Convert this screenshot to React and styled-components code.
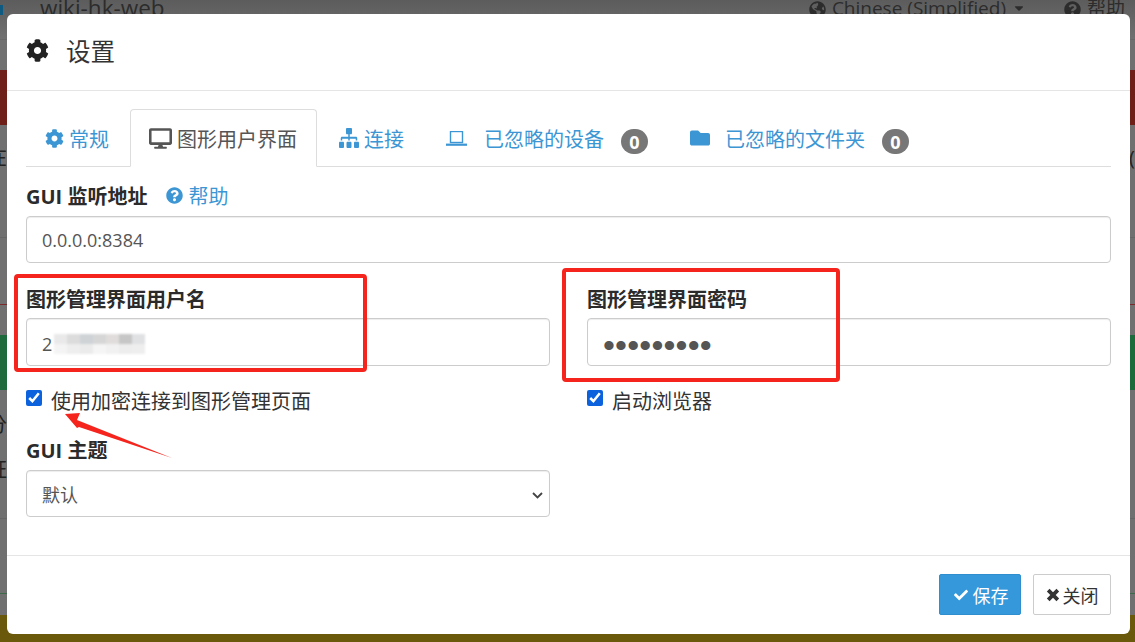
import React from "react";
import styled, { createGlobalStyle } from "styled-components";
import {
  FaCog,
  FaDesktop,
  FaSitemap,
  FaFolder,
  FaQuestionCircle,
  FaCheck,
  FaGlobeAmericas,
  FaCaretDown,
} from "react-icons/fa";

const FONT = `"Open Sans", "Noto Sans CJK SC", sans-serif`;
const LINK = "#3d96d4";
const MOSAIC = [
  ["#e9e9e9", "#dcdcdc", "#cfd3d6", "#d6d6d6", "#e1dcdc", "#c6c6c6", "#dfe1e3"],
  ["#f4f4f4", "#eeeeee", "#ebebeb", "#f5f5f5", "#f1f1f1", "#ededed", "#eeeeee"],
];

const GlobalStyle = createGlobalStyle`
  * { box-sizing: border-box; }
  html, body { margin: 0; height: 100%; overflow: hidden; }
  body { background: #707070; font-family: ${FONT}; }
`;

const Page = styled.div`
  position: relative;
  width: 1135px;
  height: 642px;
  overflow: hidden;
  display: flex;
  flex-direction: column;
  background: #707070;
`;

const Nav = styled.div`
  height: 40px;
  flex: none;
  display: flex;
  justify-content: space-between;
  padding-right: 10px;
  font-size: 19px;
  line-height: 16px;
  color: #2c2c2c;
  background: linear-gradient(#5c5c5c, #707070);
  border-bottom: 1px solid #686868;
`;

const NavLeft = styled.div`
  display: flex;
  gap: 37px;
`;

const LogoTile = styled.span`
  width: 3px;
  height: 10px;
  margin-top: 5px;
  background: #0f5a80;
`;

const NavRight = styled.div`
  display: flex;
  gap: 6px;
  svg { margin-top: 1px; }
`;

const NavSpacer = styled.span`
  width: 26px;
`;

const Brand = styled.span`
  font-size: 22.5px;
`;

const Band = styled.div`
  flex: none;
  height: ${(p) => p.$height || 55}px;
  margin-top: ${(p) => p.$top}px;
  background: ${(p) => p.$color};
`;

const Rule = styled.div`
  flex: none;
  height: 1px;
  margin-top: ${(p) => p.$top}px;
  background: ${(p) => p.$color};
`;

const Modal = styled.div`
  position: absolute;
  top: 14px;
  left: 7px;
  width: 1123px;
  background: #fff;
  border-radius: 6px;
`;

const Header = styled.div`
  height: 77px;
  display: flex;
  align-items: center;
  gap: 17px;
  padding: 0 19px 3px;
  border-bottom: 1px solid #e5e5e5;
  font-size: 24.5px;
  color: #333;
  svg { width: 23px; height: 23px; color: #222; }
`;

const Body = styled.div`
  padding: 18px 19px 38px;
`;

const Tabs = styled.div`
  display: flex;
  height: 58px;
  gap: 2px;
  border-bottom: 1px solid #ddd;
`;

const Tab = styled.div`
  height: 58px;
  display: flex;
  align-items: center;
  gap: ${(p) => p.$gap || 5}px;
  padding: 0 ${(p) => (p.$active ? 19 : 18)}px 0 18px;
  font-size: 20px;
  color: ${(p) => (p.$active ? "#555" : LINK)};
  background: ${(p) => (p.$active ? "#fff" : "transparent")};
  border: 1px solid ${(p) => (p.$active ? "#ddd" : "transparent")};
  border-bottom-color: ${(p) => (p.$active ? "#fff" : "transparent")};
  border-radius: 4px 4px 0 0;
`;

const TabIcon = styled.span`
  display: flex;
  margin-left: ${(p) => p.$left || 0}px;
  margin-right: ${(p) => p.$right || 0}px;
`;

const Badge = styled.span`
  width: 27px;
  height: 25px;
  margin: 7px 0 0 1px;
  display: flex;
  align-items: center;
  justify-content: center;
  border-radius: 13px;
  background: #777;
  color: #fff;
  font-size: 18px;
  font-weight: 700;
`;

const Form = styled.div`
  padding-top: 15px;
  display: grid;
  grid-template-columns: 524px 524px;
  column-gap: 37px;
`;

const Group = styled.div`
  grid-column: ${(p) => (p.$wide ? "1 / 3" : "auto")};
  margin-top: ${(p) => p.$top || 0}px;
`;

const LabelRow = styled.div`
  display: flex;
  align-items: center;
  gap: 19px;
  height: 26px;
  margin-bottom: ${(p) => p.$bottom}px;
`;

const Label = styled.label`
  font-size: 20px;
  font-weight: 700;
  color: #2b2b2b;
`;

const Help = styled.span`
  display: flex;
  align-items: center;
  gap: 5px;
  font-size: 20px;
  color: ${LINK};
  svg { width: 17px; height: 17px; }
`;

const fieldStyle = `
  display: block;
  width: 100%;
  height: 47px;
  padding: 0 15px;
  font-family: ${FONT};
  font-size: 18px;
  color: #555;
  background: #fff;
  border: 1px solid #ccc;
  border-radius: 4px;
  box-shadow: inset 0 1px 1px rgba(0, 0, 0, 0.075);
  outline: none;
`;

const Input = styled.input`
  ${fieldStyle}
`;

const PasswordInput = styled.input`
  ${fieldStyle}
  height: 48px;
  padding-top: 6px;
  font-family: "Liberation Sans", sans-serif;
  font-size: 34px;
  letter-spacing: 0.2px;
`;

const SelectWrap = styled.div`
  position: relative;
`;

const Select = styled.select`
  ${fieldStyle}
  padding-top: 2px;
  appearance: none;
`;

const Chevron = styled.svg`
  position: absolute;
  right: 7px;
  top: 22px;
  pointer-events: none;
`;

const MaskedField = styled.div`
  ${fieldStyle}
  height: 48px;
  padding-top: 4px;
  display: flex;
  align-items: center;
`;

const Mosaic = styled.div`
  width: 91px;
  height: 21px;
  margin-left: 2px;
  display: grid;
  grid-template-columns: repeat(7, 13px);
  grid-auto-rows: 10px;
  filter: blur(1px);
`;

const MosaicCell = styled.i`
  background: ${(p) => p.$shade};
`;

const CheckRow = styled.label`
  display: flex;
  gap: 9px;
  height: 28px;
  margin-top: 21px;
  font-size: 20px;
  line-height: 30px;
  color: #333;
  input {
    width: 16px;
    height: 16px;
    margin: 3px 0 0;
    accent-color: #0b62dc;
  }
`;

const Footer = styled.div`
  display: flex;
  justify-content: flex-end;
  gap: 12px;
  padding: 18px 19px 19px;
  border-top: 1px solid #e5e5e5;
`;

const Button = styled.button`
  height: 41px;
  width: ${(p) => p.$width}px;
  display: flex;
  align-items: center;
  justify-content: center;
  gap: ${(p) => (p.$primary ? 5 : 3)}px;
  padding: 0 0 0 ${(p) => (p.$primary ? 2 : 0)}px;
  font-family: ${FONT};
  font-size: 18px;
  color: ${(p) => (p.$primary ? "#fff" : "#333")};
  background: ${(p) => (p.$primary ? "#3498db" : "#fff")};
  border: 1px solid ${(p) => (p.$primary ? "#2e8ece" : "#ccc")};
  border-radius: 2px;
  svg { width: 14px; height: 14px; }
`;

const Highlight = styled.div`
  position: absolute;
  left: ${(p) => p.$left}px;
  top: ${(p) => p.$top}px;
  width: ${(p) => p.$width}px;
  height: ${(p) => p.$height}px;
  border: 4px solid #f5241c;
  border-radius: 4px;
  pointer-events: none;
`;

const Arrow = styled.svg`
  position: absolute;
  left: 53px;
  top: 398px;
  pointer-events: none;
`;

const Stray = styled.span`
  position: absolute;
  left: ${(p) => p.$left}px;
  top: ${(p) => p.$top}px;
  font-size: 20px;
  line-height: 24px;
  color: #222;
`;

function LaptopIcon() {
  return (
    <svg width="21" height="15" viewBox="0 0 21 15" fill="none">
      <rect x="4.5" y="0.5" width="12" height="11" stroke={LINK} strokeWidth="1.4" />
      <rect x="0" y="12.6" width="21" height="2.2" fill={LINK} />
    </svg>
  );
}

function CloseIcon() {
  return (
    <svg viewBox="0 0 14 14" fill="none">
      <path d="M2.2 2.2L11.8 11.8M11.8 2.2L2.2 11.8" stroke="#333" strokeWidth="3.8" />
    </svg>
  );
}

export default function App() {
  return (
    <Page>
      <GlobalStyle />
      <Nav>
        <NavLeft>
          <LogoTile />
          <Brand>wiki-hk-web</Brand>
        </NavLeft>
        <NavRight>
          <FaGlobeAmericas size={17} />
          <span>Chinese (Simplified)</span>
          <FaCaretDown size={14} />
          <NavSpacer />
          <FaQuestionCircle size={17} />
          <span>帮助</span>
        </NavRight>
      </Nav>
      <Band $top={30} $color="#6e1f18" />
      <Rule $top={112} $color="#666666" />
      <Rule $top={66} $color="#7a2a2a" />
      <Band $top={30} $color="#1d6b3c" />
      <Rule $top={128} $color="#666666" />
      <Rule $top={74} $color="#3d6b4a" />
      <Band $top={21} $height={27} $color="#6b590b" />
      <Stray $left={-13} $top={146}>在</Stray>
      <Stray $left={1129} $top={146}>(</Stray>
      <Stray $left={-13} $top={413}>分</Stray>
      <Stray $left={-13} $top={458}>证</Stray>

      <Modal>
        <Header>
          <FaCog />
          <span>设置</span>
        </Header>
        <Body>
          <Tabs>
            <Tab>
              <FaCog size={19} />
              常规
            </Tab>
            <Tab $active>
              <FaDesktop size={23} />
              图形用户界面
            </Tab>
            <Tab>
              <TabIcon $left={1}>
                <FaSitemap width={20} height={18} preserveAspectRatio="none" />
              </TabIcon>
              连接
            </Tab>
            <Tab $gap={16}>
              <TabIcon $left={2} $right={1}>
                <LaptopIcon />
              </TabIcon>
              已忽略的设备
              <Badge>0</Badge>
            </Tab>
            <Tab $gap={16}>
              <TabIcon $left={2} $right={-1}>
                <FaFolder size={20} />
              </TabIcon>
              已忽略的文件夹
              <Badge>0</Badge>
            </Tab>
          </Tabs>
          <Form>
            <Group $wide>
              <LabelRow $bottom={8}>
                <Label>GUI 监听地址</Label>
                <Help>
                  <FaQuestionCircle />
                  帮助
                </Help>
              </LabelRow>
              <Input defaultValue="0.0.0.0:8384" />
            </Group>
            <Group $top={22}>
              <LabelRow $bottom={7}>
                <Label>图形管理界面用户名</Label>
              </LabelRow>
              <MaskedField>
                2
                <Mosaic>
                  {MOSAIC.flat().map((shade, i) => (
                    <MosaicCell key={i} $shade={shade} />
                  ))}
                </Mosaic>
              </MaskedField>
              <CheckRow>
                <input type="checkbox" defaultChecked />
                使用加密连接到图形管理页面
              </CheckRow>
            </Group>
            <Group $top={22}>
              <LabelRow $bottom={7}>
                <Label>图形管理界面密码</Label>
              </LabelRow>
              <PasswordInput type="password" defaultValue="123456789" />
              <CheckRow>
                <input type="checkbox" defaultChecked />
                启动浏览器
              </CheckRow>
            </Group>
            <Group $top={21}>
              <LabelRow $bottom={8}>
                <Label>GUI 主题</Label>
              </LabelRow>
              <SelectWrap>
                <Select defaultValue="默认">
                  <option>默认</option>
                </Select>
                <Chevron width="11" height="7" viewBox="0 0 11 7" fill="none">
                  <path d="M1 1L5.5 5.5L10 1" stroke="#444" strokeWidth="1.8" />
                </Chevron>
              </SelectWrap>
            </Group>
          </Form>
        </Body>
        <Footer>
          <Button $primary $width={82}>
            <FaCheck />
            保存
          </Button>
          <Button $width={78}>
            <CloseIcon />
            关闭
          </Button>
        </Footer>
        <Highlight $left={7} $top={260} $width={353} $height={98} />
        <Highlight $left={555} $top={254} $width={278} $height={114} />
        <Arrow width="125" height="50" viewBox="0 0 125 50">
          <polygon points="5,2 20,1 17,8 112,46 19,15 17,16" fill="#f5241c" />
        </Arrow>
      </Modal>
    </Page>
  );
}
